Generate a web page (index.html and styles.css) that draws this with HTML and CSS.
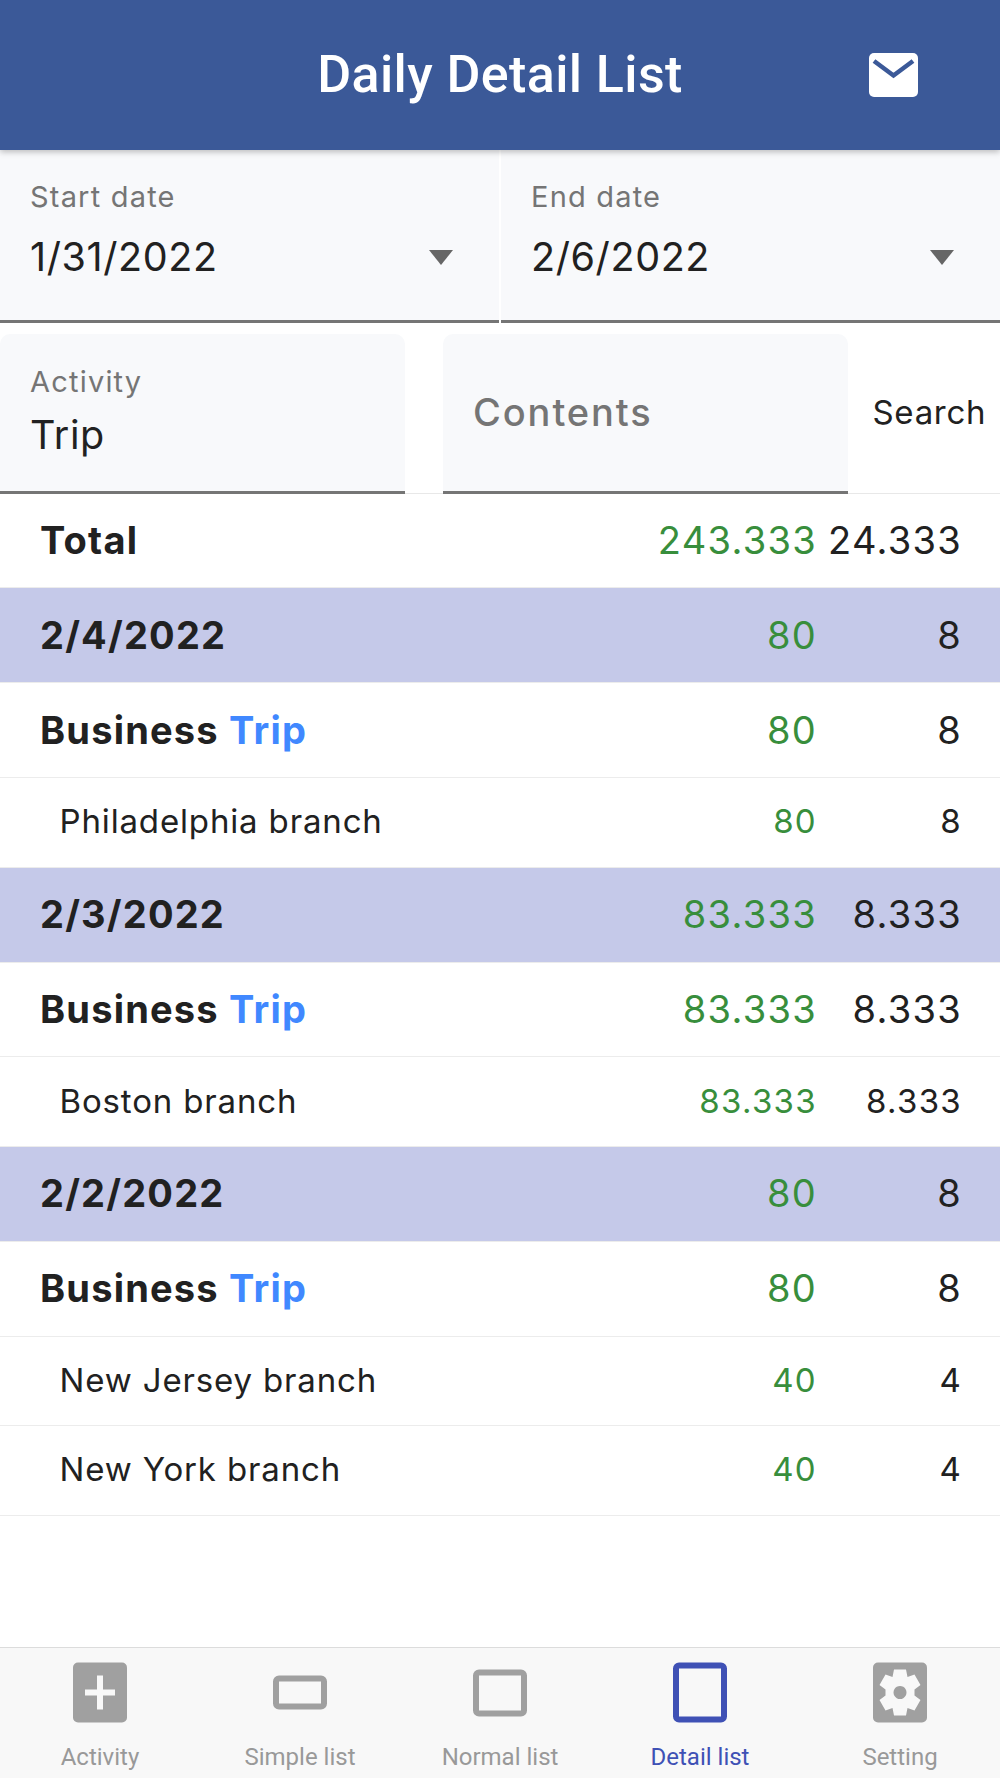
FILE: index.html
```html
<!DOCTYPE html>
<html lang="en">
<head>
<meta charset="utf-8">
<title>Daily Detail List</title>
<link rel="stylesheet" href="styles.css">
</head>
<body>
<div class="app">
  <header class="appbar">
    <h1 class="title">Daily Detail List</h1>
    <svg class="mail" viewBox="0 0 49 44"><rect width="49" height="44" rx="5" fill="#fff"/><path d="M5 8 24.5 22.5 44 8" fill="none" stroke="#3b5998" stroke-width="4.5"/></svg>
  </header>

  <section class="dates">
    <div class="field date">
      <div>
        <div class="label">Start date</div>
        <div class="value">1/31/2022</div>
      </div>
      <span class="caret"></span>
    </div>
    <div class="field date">
      <div>
        <div class="label">End date</div>
        <div class="value">2/6/2022</div>
      </div>
      <span class="caret"></span>
    </div>
  </section>

  <section class="filters">
    <div class="field box">
      <div class="label">Activity</div>
      <div class="value">Trip</div>
    </div>
    <div class="field box boxplace">
      <div class="placeholder">Contents</div>
    </div>
    <div class="search">Search</div>
  </section>

  <main class="list">
    <div class="row"><span class="name bold">Total</span><span class="num green">243.333</span><span class="num">24.333</span></div>

    <div class="row day"><span class="name bold">2/4/2022</span><span class="num green">80</span><span class="num">8</span></div>
    <div class="row"><span class="name bold">Business <span class="blue">Trip</span></span><span class="num green">80</span><span class="num">8</span></div>
    <div class="row sub"><span class="name">Philadelphia branch</span><span class="num green">80</span><span class="num">8</span></div>

    <div class="row day"><span class="name bold">2/3/2022</span><span class="num green">83.333</span><span class="num">8.333</span></div>
    <div class="row"><span class="name bold">Business <span class="blue">Trip</span></span><span class="num green">83.333</span><span class="num">8.333</span></div>
    <div class="row sub"><span class="name">Boston branch</span><span class="num green">83.333</span><span class="num">8.333</span></div>

    <div class="row day"><span class="name bold">2/2/2022</span><span class="num green">80</span><span class="num">8</span></div>
    <div class="row"><span class="name bold">Business <span class="blue">Trip</span></span><span class="num green">80</span><span class="num">8</span></div>
    <div class="row sub"><span class="name">New Jersey branch</span><span class="num green">40</span><span class="num">4</span></div>
    <div class="row sub"><span class="name">New York branch</span><span class="num green">40</span><span class="num">4</span></div>
  </main>

  <nav class="tabs">
    <div class="tab">
      <svg class="ticon" viewBox="0 0 54 60"><rect width="54" height="60" rx="5" fill="currentColor"/><path d="M27 13v34M12 30h30" stroke="#f8f8f8" stroke-width="6" fill="none"/></svg>
      <span class="tlabel">Activity</span>
    </div>
    <div class="tab">
      <svg class="ticon" viewBox="0 0 54 60"><rect x="3" y="16" width="48" height="28" rx="3" fill="none" stroke="currentColor" stroke-width="6"/></svg>
      <span class="tlabel">Simple list</span>
    </div>
    <div class="tab">
      <svg class="ticon" viewBox="0 0 54 60"><rect x="3" y="10" width="48" height="41" rx="3" fill="none" stroke="currentColor" stroke-width="6"/></svg>
      <span class="tlabel">Normal list</span>
    </div>
    <div class="tab active">
      <svg class="ticon" viewBox="0 0 54 60"><rect x="3" y="3" width="48" height="54" rx="3" fill="none" stroke="currentColor" stroke-width="6"/></svg>
      <span class="tlabel">Detail list</span>
    </div>
    <div class="tab">
      <svg class="ticon" viewBox="0 0 54 60"><rect width="54" height="60" rx="5" fill="currentColor"/><path fill="#f8f8f8" fill-rule="evenodd" d="M21 7H33L34.5 14.5 41.5 12 47.5 22.5 41.5 27V33L47.5 37.5 41.5 48 34.5 45.5 33 53H21L19.5 45.5 12.5 48 6.5 37.5 12.5 33V27L6.5 22.5 12.5 12 19.5 14.5Z M27 23.5a6.5 6.5 0 1 0 .01 0z"/></svg>
      <span class="tlabel">Setting</span>
    </div>
  </nav>
</div>
</body>
</html>
```

FILE: styles.css
```css
* { box-sizing: border-box; }
html, body { margin: 0; padding: 0; background: #fff; }
body { font-family: "Inter", "Liberation Sans", sans-serif; color: #212121; }
.app { width: 1000px; height: 1778px; display: flex; flex-direction: column; overflow: hidden; }

.appbar { height: 150px; flex: none; background: #3b5998; display: flex; align-items: center; padding: 0 82px 0 0; position: relative; z-index: 2; box-shadow: 0 2px 6px rgba(0,0,0,.25); }
.title { margin: 0; flex: 1; padding-left: 131px; text-align: center; color: #fff; font-family: "Roboto", sans-serif; font-weight: 500; font-size: 52px; letter-spacing: .4px; line-height: 1; }
.mail { width: 49px; height: 44px; display: block; }

.dates { display: flex; justify-content: space-between; height: 172.5px; flex: none; }
.field { background: #f8f9fb; border-bottom: 3px solid #757575; }
.date { width: 499px; padding: 27px 30px 0; display: flex; justify-content: space-between; align-items: flex-start; }
.label { font-size: 29px; line-height: 40px; color: #757575; letter-spacing: 1.2px; }
.value { font-size: 39.5px; line-height: 50px; margin-top: 15px; color: #212121; letter-spacing: .6px; }
.caret { width: 0; height: 0; margin-top: 73px; margin-right: 16px; border-left: 12px solid transparent; border-right: 12px solid transparent; border-top: 15px solid #666; }

.filters { display: flex; align-items: flex-start; height: 171px; flex: none; padding-top: 11px; border-bottom: 1px solid #e8e8e8; }
.box { width: 404.5px; height: 160px; border-radius: 10px 10px 0 0; padding: 28px 30px 0; }
.box .value { margin-top: 8px; }
.boxplace { margin-left: 38.5px; display: flex; align-items: center; padding-bottom: 1px; padding-top: 0; }
.placeholder { font-size: 38px; font-weight: 500; color: #757575; letter-spacing: 1.9px; }
.search { margin-left: 25px; height: 160px; line-height: 157px; font-size: 33px; letter-spacing: .7px; color: #212121; white-space: nowrap; }

.list { flex: 1; min-height: 0; }
.row { display: flex; align-items: center; height: 94.9px; padding: 0 38px 1px 40px; border-bottom: 1px solid #ececec; font-size: 38px; }
.day { background: #c5c9e9; }
.sub { height: 89.5px; font-size: 33px; padding-left: 59.5px; padding-bottom: 2px; }
.name { flex: 1; letter-spacing: 1.2px; }
.sub .name { letter-spacing: .85px; }
.bold { font-weight: 700; }
.blue { color: #4088ff; }
.num { letter-spacing: 1.3px; text-align: right; }
.num.green { color: #388e3c; }
.num:last-child { width: 145px; }

.tabs { height: 131px; flex: none; display: flex; background: #f8f8f8; border-top: 1px solid #dcdcdc; }
.tab { flex: 1; display: flex; flex-direction: column; align-items: center; padding-top: 14px; color: #a0a0a0; }
.tab.active { color: #3f51b5; }
.ticon { width: 54px; height: 61px; display: block; }
.tlabel { font-family: "Roboto", sans-serif; font-size: 24px; line-height: 32px; margin-top: 18px; color: #999; }
.active .tlabel { color: #3f51b5; }
```
